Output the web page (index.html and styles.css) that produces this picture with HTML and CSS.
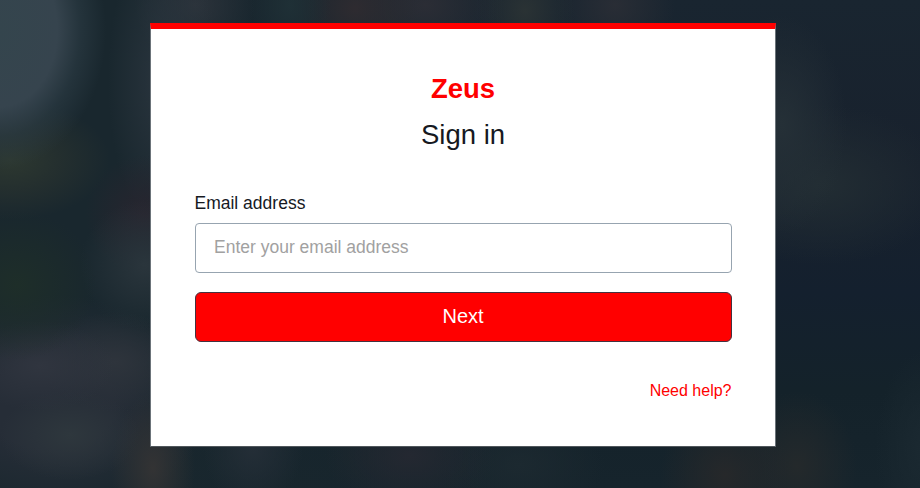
FILE: index.html
```
<!DOCTYPE html>
<html lang="en">
<head>
  <meta charset="UTF-8" />
  <meta name="viewport" content="width=device-width, initial-scale=1.0"/>
  <title>Zeus - Sign in</title>
  <link rel="stylesheet" href="styles.css">
</head>
<body>
  <main class="login-card">
    <h1 class="brand">Zeus</h1>
    <h2 class="title">Sign in</h2>

    <form class="login-form">
      <label for="email">Email address</label>
      <input type="email" id="email" placeholder="Enter your email address" required />
      <button type="submit" class="next-btn">Next</button>
    </form>

    <a href="#" class="help-link">Need help?</a>
  </main>
</body>
</html>
```

FILE: styles.css
```
* {
  box-sizing: border-box;
}

body {
  margin: 0;
  height: 100vh;
  overflow: hidden;
  padding: 23px 144px 0 150px;
  font-family: "Liberation Sans", Arial, sans-serif;
  color: #16191f;
  /* dark out-of-focus backdrop */
  background-color: #17232b;
  background-image:
    radial-gradient(ellipse 108px 140px at -2px 30px, #34454d 0%, #36444e 55%, #2c3c4599 76%, transparent 100%),
    radial-gradient(ellipse 100px 60px at 10px 160px, #2d3830 0%, #2b342f99 50%, transparent 100%),
    radial-gradient(ellipse 80px 75px at 17px 285px, #1e2e29 0%, transparent 100%),
    radial-gradient(ellipse 65px 65px at 145px 265px, #2a353c 0%, transparent 100%),
    radial-gradient(ellipse 60px 60px at 145px 215px, #28252f 0%, transparent 100%),
    radial-gradient(ellipse 75px 45px at 40px 366px, #30353f 0%, transparent 100%),
    radial-gradient(ellipse 75px 50px at 115px 362px, #2e343c 0%, transparent 100%),
    radial-gradient(ellipse 70px 45px at 70px 435px, #2e373d 0%, transparent 100%),
    radial-gradient(ellipse 42px 75px at 153px 468px, #333334 0%, transparent 100%),
    radial-gradient(ellipse 160px 110px at 50px 405px, #262d37 0%, #262d37 40%, transparent 100%),
    radial-gradient(ellipse 55px 150px at 163px 80px, #2a353e 0%, transparent 100%),
    radial-gradient(ellipse 60px 60px at 195px 5px, #2c333b 0%, transparent 100%),
    radial-gradient(ellipse 40px 60px at 290px 5px, #1f3036 0%, transparent 100%),
    radial-gradient(ellipse 65px 60px at 355px 8px, #2e2b30 0%, transparent 100%),
    radial-gradient(ellipse 80px 60px at 425px 5px, #2b2d35 0%, transparent 100%),
    radial-gradient(ellipse 50px 60px at 525px 10px, #2a3234 0%, transparent 100%),
    radial-gradient(ellipse 60px 60px at 615px 5px, #292d35 0%, transparent 100%),
    radial-gradient(ellipse 65px 110px at 782px 125px, #253037 0%, transparent 100%),
    radial-gradient(ellipse 130px 80px at 820px 185px, #222d33 0%, transparent 100%),
    radial-gradient(ellipse 50px 60px at 253px 448px, #242e37 0%, transparent 100%),
    radial-gradient(ellipse 85px 55px at 410px 456px, #242831 0%, transparent 100%),
    radial-gradient(ellipse 85px 55px at 520px 465px, #1c2930 0%, transparent 100%),
    radial-gradient(ellipse 65px 70px at 725px 475px, #26282a 0%, transparent 100%),
    radial-gradient(ellipse 60px 75px at 797px 466px, #24292b 0%, transparent 100%),
    radial-gradient(ellipse 50px 100px at 925px 450px, #1b2931 0%, transparent 100%),
    linear-gradient(90deg, #19272e 0%, #19272e 15%, transparent 60%),
    linear-gradient(#192530 0%, #18212d 35%, #14202e 60%, #14222a 80%, #16242c 100%);
}

.login-card {
  height: 424px;
  padding: 42px 43.5px 0;
  background: #fff;
  border: 1px solid #6b7379;
  border-top: 6px solid #f00;
  border-bottom-color: #50575c;
}

.brand,
.title {
  margin: 0;
  font-size: 27.5px;
  line-height: 36px;
  text-align: center;
}

.brand {
  color: #f00;
}

.title {
  margin-top: 10px;
  font-weight: normal;
}

.login-form {
  display: flex;
  flex-direction: column;
  margin-top: 38px;
}

label {
  margin-bottom: 8px;
  font-size: 17.5px;
  line-height: 24px;
}

input,
button {
  width: 100%;
  height: 50px;
  font-family: inherit;
}

input {
  padding: 0 18.5px 2px;
  font-size: 17.5px;
  background: #fff;
  border: 1px solid #97a4b0;
  border-radius: 4px;
}

input::placeholder {
  color: #a1a1a1;
}

.next-btn {
  margin-top: 19px;
  padding: 0 0 2px;
  font-size: 20px;
  color: #fff;
  background: #f00;
  border: 1px solid #44323f;
  border-radius: 6px;
  cursor: pointer;
}

.help-link {
  display: block;
  margin-top: 38px;
  font-size: 16px;
  line-height: 22px;
  text-align: right;
  color: #f00;
  text-decoration: none;
}
```
